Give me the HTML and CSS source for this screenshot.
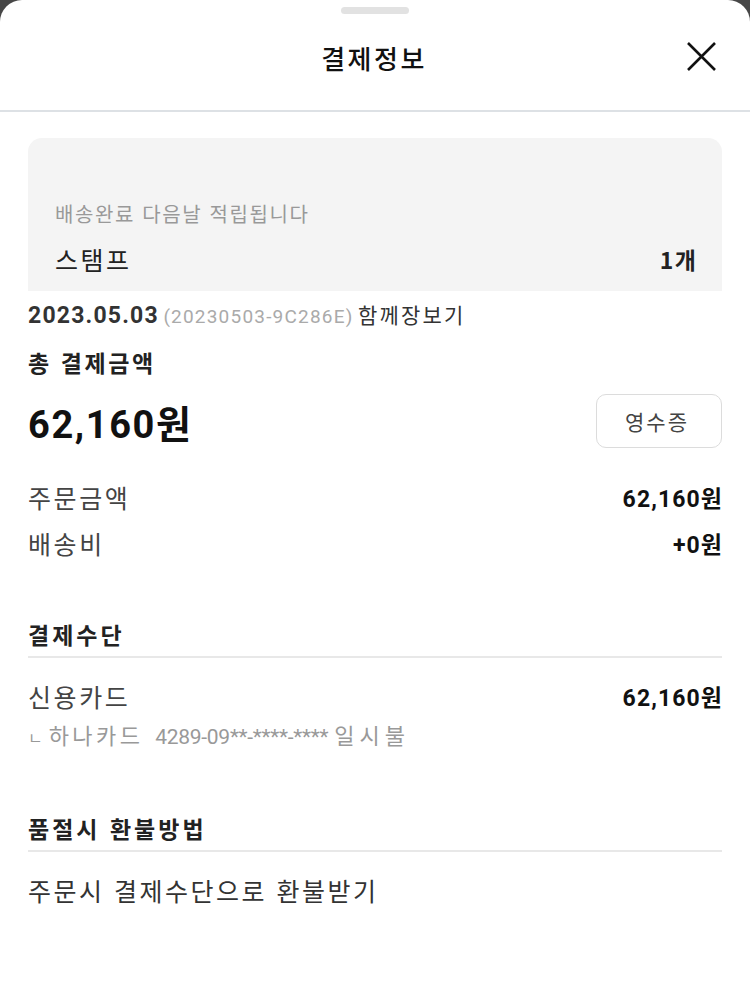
FILE: index.html
```html
<!DOCTYPE html>
<html lang="ko">
<head>
<meta charset="utf-8">
<link rel="stylesheet" href="styles.css">
<title>결제정보</title>
</head>
<body>
<div class="sheet">
  <div class="handle"></div>
  <header class="header">
    <span></span>
    <h1 class="title">결제정보</h1>
    <button class="close" aria-label="닫기">
      <svg width="32" height="32" viewBox="0 0 32 32"><path d="M3 2 L30 29 M30 2 L3 29" stroke="#111" stroke-width="2.6" fill="none"/></svg>
    </button>
  </header>
  <main class="content">
    <section class="stamp-box">
      <p class="stamp-note">배송완료 다음날 적립됩니다</p>
      <div class="stamp-row">
        <span class="stamp-label">스탬프</span>
        <span class="stamp-count">1개</span>
      </div>
    </section>

    <p class="order-line"><span class="order-date">2023.05.03</span> <span class="order-no">(20230503-9C286E)</span> <span class="order-type">함께장보기</span></p>

    <h2 class="total-title">총 결제금액</h2>
    <div class="total-row">
      <span class="total-amount">62,160원</span>
      <button class="receipt">영수증</button>
    </div>

    <div class="row row-first">
      <span class="label">주문금액</span>
      <span class="value">62,160원</span>
    </div>
    <div class="row row-next">
      <span class="label">배송비</span>
      <span class="value">+0원</span>
    </div>

    <h2 class="section-title pay-title">결제수단</h2>
    <div class="row row-card">
      <span class="label">신용카드</span>
      <span class="value">62,160원</span>
    </div>
    <p class="card-detail"><span class="card-mark">ㄴ</span> <span class="card-name">하나카드</span>&nbsp;&nbsp;<span class="card-num">4289-09**-****-****</span> <span class="card-plan">일시불</span></p>

    <h2 class="section-title refund-title">품절시 환불방법</h2>
    <p class="refund-text">주문시 결제수단으로 환불받기</p>
  </main>
</div>
</body>
</html>
```

FILE: styles.css
```css
* { box-sizing: border-box; }
html, body { margin: 0; padding: 0; }
body {
  background: #474747;
  font-family: "Noto Sans CJK KR", "Noto Sans", Roboto, sans-serif;
  color: #222;
}
.sheet {
  background: #fff;
  border-radius: 22px 22px 0 0;
  min-height: 986px;
  overflow: hidden;
  padding-top: 7px;
}
.handle {
  width: 68px;
  height: 7px;
  border-radius: 4px;
  background: #e2e2e2;
  margin: 0 auto;
}
.header {
  display: grid;
  grid-template-columns: 1fr auto 1fr;
  align-items: center;
  height: 98px;
  padding: 0 33px 10px 28px;
  border-bottom: 2px solid #dde1e5;
}
.title {
  margin: 0;
  font-size: 26px;
  font-weight: 500;
  color: #111;
  letter-spacing: 2.5px;
  padding-left: 3px;
}
.close {
  justify-self: end;
  background: none;
  border: 0;
  padding: 0;
  width: 32px;
  height: 32px;
  display: flex;
}
.content { padding: 0 28px; }
.stamp-box {
  margin-top: 26px;
  background: #f4f4f4;
  border-radius: 14px 14px 0 0;
  padding: 62px 26px 16px 27px;
}
.stamp-note {
  margin: 0;
  font-size: 20px;
  line-height: 28px;
  color: #999;
  letter-spacing: 1.6px;
}
.stamp-row {
  margin-top: 15px;
  display: flex;
  justify-content: space-between;
  align-items: center;
  height: 32px;
}
.stamp-label { font-size: 25px; color: #222; letter-spacing: 2.5px; }
.stamp-count { font-size: 23px; font-weight: 700; color: #222; letter-spacing: 1.5px; margin-right: -1.5px; }
.order-line {
  margin: 8px 0 0;
  line-height: 30px;
  white-space: nowrap;
}
.order-date {
  font-family: Roboto, "Noto Sans CJK KR", sans-serif;
  font-weight: 700;
  font-size: 23px;
  color: #333;
  letter-spacing: 1.2px;
}
.order-no {
  font-family: Roboto, "Noto Sans CJK KR", sans-serif;
  font-size: 19px;
  color: #aaa;
  letter-spacing: 1.2px;
}
.order-type { font-size: 21px; color: #333; letter-spacing: 2.2px; }
.total-title {
  margin: 15px 0 0;
  font-size: 23px;
  line-height: 30px;
  font-weight: 700;
  color: #222;
  letter-spacing: 2.6px;
}
.total-row {
  margin-top: 17px;
  height: 54px;
  display: flex;
  align-items: center;
  justify-content: space-between;
}
.total-amount {
  font-family: Roboto, "Noto Sans CJK KR", sans-serif;
  font-size: 38px;
  line-height: 44px;
  font-weight: 700;
  color: #111;
  letter-spacing: 1.6px;
  margin-top: 8px;
}
.receipt {
  width: 126px;
  height: 54px;
  border: 1.5px solid #dcdcdc;
  border-radius: 10px;
  background: #fff;
  font-family: "Noto Sans CJK KR", sans-serif;
  font-size: 21px;
  color: #444;
  letter-spacing: 2px;
  padding-left: 2px;
}
.row {
  display: flex;
  justify-content: space-between;
  align-items: center;
  height: 34px;
}
.row-first { margin-top: 32px; }
.row-next { margin-top: 12px; }
.row-card { margin-top: 21px; }
.label { font-size: 25px; color: #444; letter-spacing: 2.6px; }
.value {
  font-family: Roboto, "Noto Sans CJK KR", sans-serif;
  font-size: 23px;
  font-weight: 700;
  color: #111;
  letter-spacing: 1.1px;
  margin-right: -1.1px;
}
.section-title {
  margin: 0;
  font-size: 23px;
  line-height: 32px;
  font-weight: 700;
  color: #222;
  padding-bottom: 6px;
  border-bottom: 2px solid #e8e8e8;
  letter-spacing: 3px;
}
.pay-title { margin-top: 58px; }
.refund-title { margin-top: 61px; }
.card-detail {
  margin: 7px 0 0;
  font-size: 21px;
  line-height: 28px;
  color: #999;
  white-space: nowrap;
}
.card-mark { font-size: 16px; }
.card-name { font-size: 22px; letter-spacing: 3.5px; }
.card-plan { font-size: 22px; letter-spacing: 5px; }
.card-num { font-family: Roboto, sans-serif; font-size: 21px; letter-spacing: -0.3px; }
.refund-text {
  margin: 21px 0 0;
  font-size: 25px;
  line-height: 34px;
  color: #333;
  letter-spacing: 2.5px;
}
```
